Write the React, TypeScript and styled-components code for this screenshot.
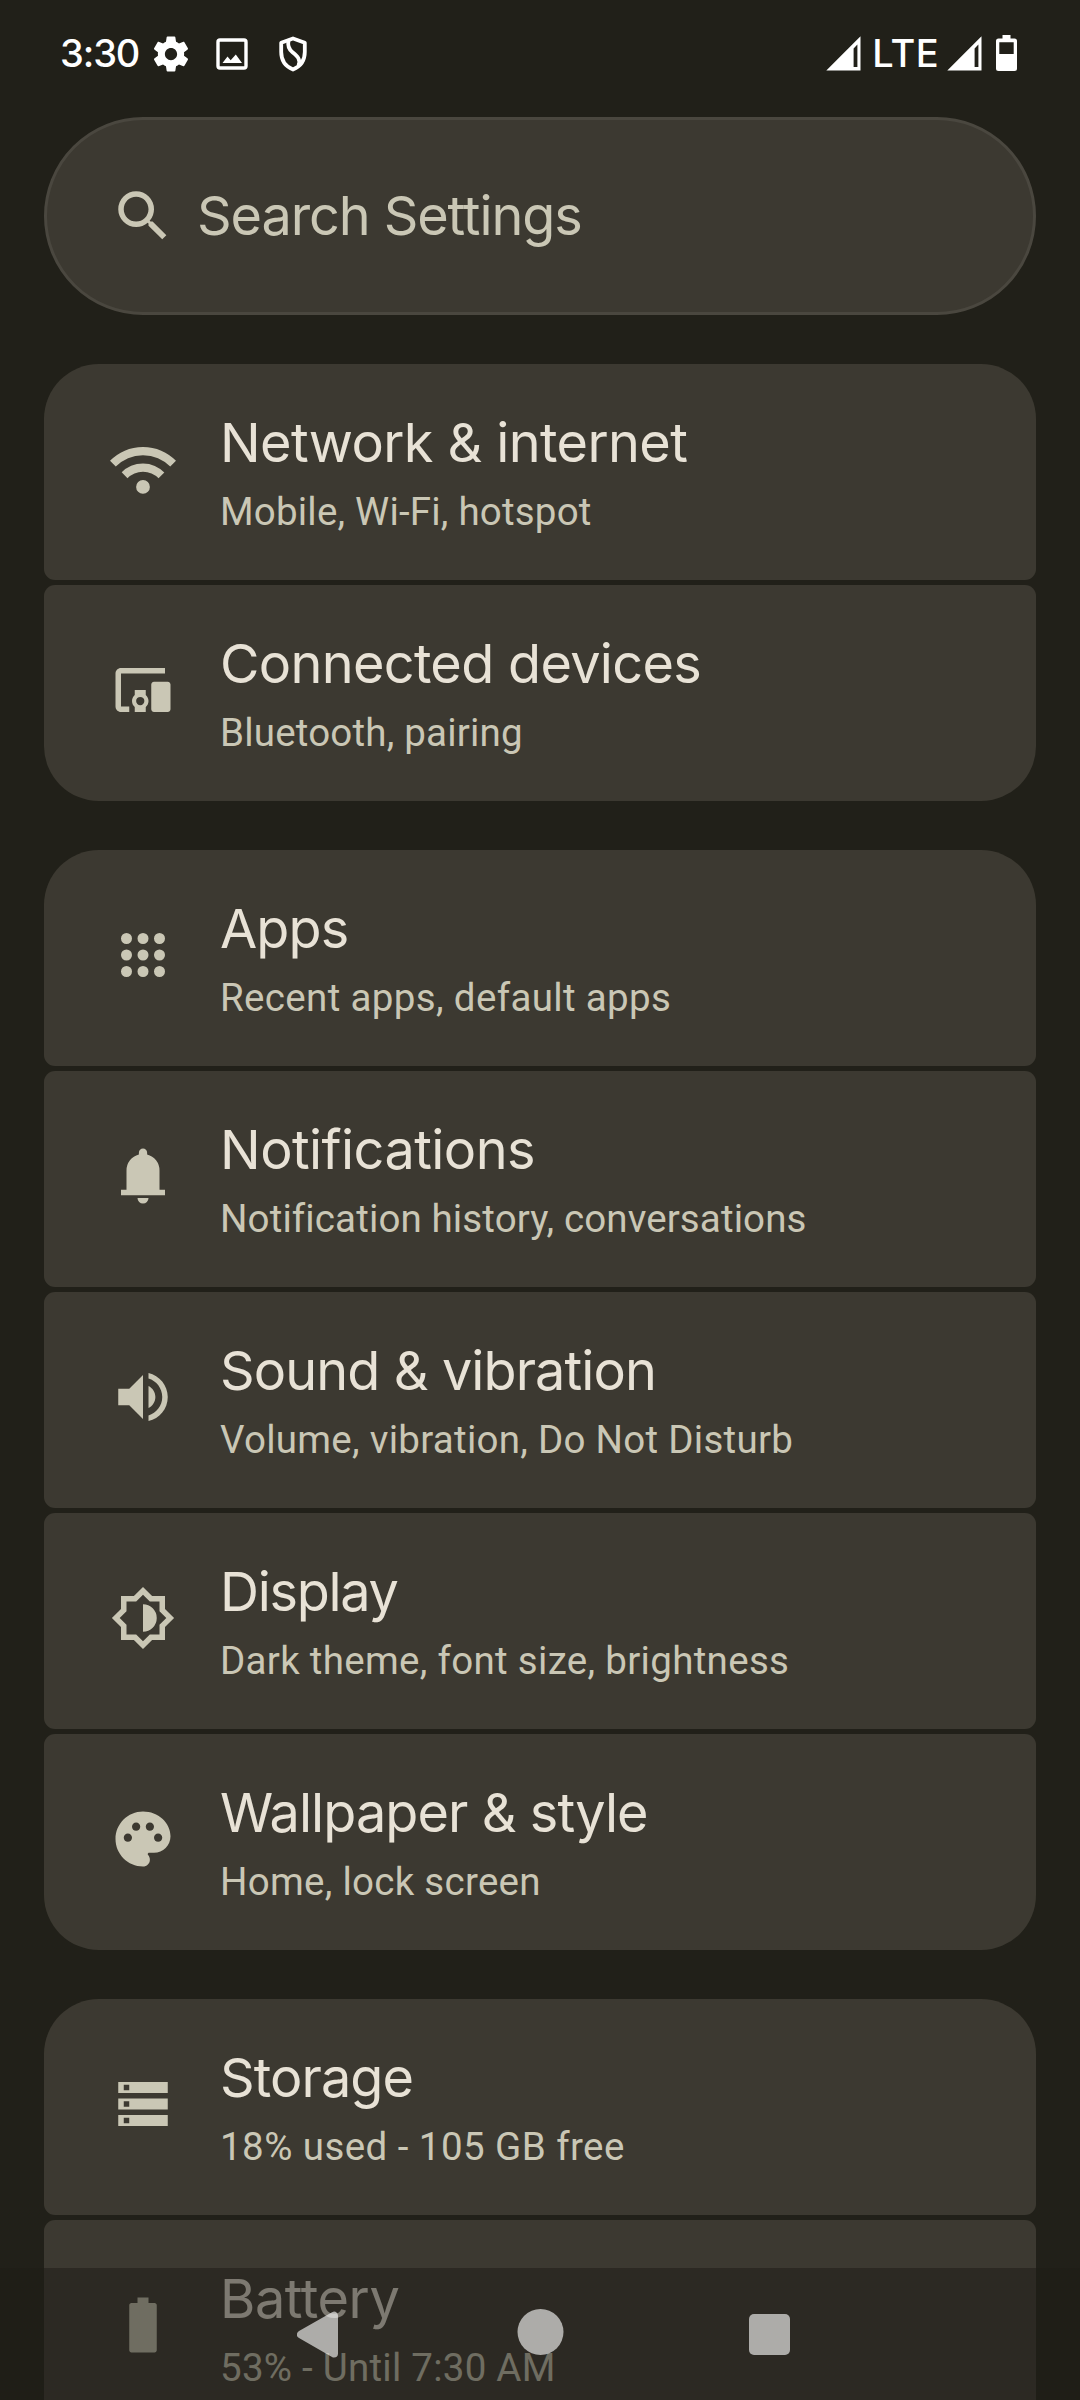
import React from "react";
import styled, { createGlobalStyle } from "styled-components";

const color = {
  background: "#212019",
  surface: "#3c3931",
  outline: "#4a473f",
  title: "#e8e2d6",
  muted: "#cac7b5",
  status: "#ffffff",
};

const GlobalStyle = createGlobalStyle`
  *, *::before, *::after { box-sizing: border-box; }
  body { margin: 0; background: ${color.background}; }
`;

const Screen = styled.div`
  position: relative;
  display: flex;
  flex-direction: column;
  width: 1080px;
  height: 2400px;
  overflow: hidden;
  background: ${color.background};
`;

const StatusBar = styled.header`
  display: flex;
  align-items: center;
  justify-content: space-between;
  flex: none;
  height: 107px;
  padding: 0 63px 0 60px;
  color: ${color.status};
`;

const StatusStart = styled.div`
  display: flex;
  align-items: center;
  gap: 19px;
`;

const StatusEnd = styled.div`
  display: flex;
  align-items: center;
`;

const StatusText = styled.span<{ $tracking: number }>`
  font: 500 38px/46px Inter, "Liberation Sans", sans-serif;
  letter-spacing: ${(p) => p.$tracking}px;
  padding-bottom: 2px;
`;

const Clock = styled(StatusText)`
  width: 70.5px;
  white-space: nowrap;
`;

const Network = styled(StatusText)`
  margin: 0 8px 0 11px;
`;

const StatusIcon = styled.svg`
  display: block;
  width: 42px;
  height: 42px;
`;

const SignalIcon = styled.svg`
  display: block;
  width: 35px;
  height: 35px;
`;

const BatteryLevel = styled.svg`
  display: block;
  width: 21px;
  height: 36px;
  margin: 0 0 2px 14px;
`;

const Content = styled.main`
  display: flex;
  flex-direction: column;
  gap: 49px;
  padding: 10px 44px 0;
`;

const SearchBar = styled.div`
  display: flex;
  align-items: center;
  gap: 21px;
  height: 198px;
  padding-left: 63px;
  border: 3px solid ${color.outline};
  border-radius: 99px;
  background: ${color.surface};
  color: ${color.muted};
`;

const Icon = styled.svg`
  display: block;
  flex: none;
  width: 66px;
  height: 66px;
  fill: currentColor;
  fill-rule: evenodd;
`;

const Heading = styled.span<{ $tracking: number }>`
  font: 400 54px/66px Inter, "Liberation Sans", sans-serif;
  letter-spacing: ${(p) => p.$tracking}px;
  white-space: nowrap;
`;

const Group = styled.section`
  display: flex;
  flex-direction: column;
  gap: 5px;
`;

const Card = styled.div<{ $first: boolean; $last: boolean }>`
  display: flex;
  flex: none;
  gap: 44px;
  height: 216px;
  padding-left: 66px;
  border-radius: ${(p) => (p.$first ? "55px 55px" : "11px 11px")} ${(p) => (p.$last ? "55px 55px" : "11px 11px")};
  background: ${color.surface};
  color: ${color.muted};

  & > ${Icon} {
    margin-top: 72px;
  }
`;

const Labels = styled.div`
  display: flex;
  flex-direction: column;
  gap: 13px;
  padding-top: 46px;
`;

const CardTitle = styled(Heading)`
  color: ${color.title};
`;

const Summary = styled.span<{ $tracking: number }>`
  font: 400 38.5px/46px Roboto, "Liberation Sans", sans-serif;
  letter-spacing: ${(p) => p.$tracking}px;
  white-space: nowrap;
`;

const NavigationBar = styled.nav`
  position: absolute;
  left: 0;
  right: 0;
  bottom: 0;
  display: flex;
  height: 132px;
  padding-left: 201px;
  background: rgba(31, 29, 22, 0.53);
`;

const NavButton = styled.svg`
  display: block;
  width: 226px;
  height: 132px;
  fill: #fff;
  stroke: #fff;
  stroke-linejoin: round;
  opacity: 0.61;
`;

const paths = {
  search:
    "M15.5 14h-.79l-.28-.27A6.471 6.471 0 0 0 16 9.5 6.5 6.5 0 1 0 9.5 16c1.61 0 3.09-.59 4.23-1.57l.27.28v.79l5 4.99L20.49 19l-4.99-5zm-6 0C7.01 14 5 11.99 5 9.5S7.01 5 9.5 5 14 7.01 14 9.5 11.99 14 9.5 14z",
  wifi: "M12 21q-1.05 0-1.775-.725T9.5 18.5t.725-1.775T12 16t1.775.725T14.5 18.5t-.725 1.775T12 21zM6.35 15.35l-2.1-2.15q1.475-1.475 3.463-2.337T12 10t4.288.875t3.462 2.375l-2.1 2.1q-1.1-1.1-2.55-1.725T12 13t-3.1.625t-2.55 1.725zM2.1 11.1L0 9q2.3-2.35 5.375-3.675T12 4t6.625 1.325T24 9l-2.1 2.1q-1.925-1.925-4.462-3.012T12 7T6.563 8.088T2.1 11.1z",
  devices:
    "M4 6h16V4H4c-1.1 0-2 .9-2 2v12c0 1.1.9 2 2 2h3v-2H4zM9 12v1.78c-.61.55-1 1.33-1 2.22s.39 1.67 1 2.22V20h4v-1.78c.61-.55 1-1.34 1-2.22s-.39-1.67-1-2.22V12zm2 5.5a1.5 1.5 0 1 1 0-3 1.5 1.5 0 0 1 0 3zM16 9h5c.5 0 1 .5 1 1v9c0 .5-.5 1-1 1h-5c-.5 0-1-.5-1-1v-9c0-.5.5-1 1-1z",
  apps: [6, 12, 18]
    .flatMap((y) => [6, 12, 18].map((x) => `M${x - 2} ${y}a2 2 0 1 0 4 0a2 2 0 1 0-4 0z`))
    .join(""),
  bell: "M4 19v-2h2v-7q0-2.075 1.25-3.687T10.5 4.2v-.7q0-.625.438-1.062T12 2t1.063.438T13.5 3.5v.7q2 .5 3.25 2.113T18 10v7h2v2zm8 3q-.825 0-1.412-.587T10 20h4q0 .825-.587 1.413T12 22z",
  volume:
    "M3 9v6h4l5 5V4L7 9H3zm13.5 3c0-1.77-1.02-3.29-2.5-4.03v8.05c1.48-.73 2.5-2.25 2.5-4.02zM14 3.23v2.06c2.89.86 5 3.54 5 6.71s-2.11 5.85-5 6.71v2.06c4.01-.91 7-4.49 7-8.77s-2.99-7.86-7-8.77z",
  brightness:
    "M20 15.31L23.31 12 20 8.69V4h-4.69L12 .69 8.69 4H4v4.69L.69 12 4 15.31V20h4.69L12 23.31 15.31 20H20zM18 14.48V18h-3.52L12 20.48 9.52 18H6v-3.52L3.52 12 6 9.52V6h3.52L12 3.52 14.48 6H18v3.52L20.48 12zM12 17a5 5 0 0 0 0-10z",
  palette:
    "M12 2C6.49 2 2 6.49 2 12s4.49 10 10 10c1.38 0 2.5-1.12 2.5-2.5 0-.61-.23-1.2-.64-1.67-.08-.1-.13-.21-.13-.33 0-.28.22-.5.5-.5H16c3.31 0 6-2.69 6-6 0-4.96-4.49-9-10-9zm5.5 11c-.83 0-1.5-.67-1.5-1.5s.67-1.5 1.5-1.5 1.5.67 1.5 1.5-.67 1.5-1.5 1.5zm-3-4c-.83 0-1.5-.67-1.5-1.5S13.67 6 14.5 6s1.5.67 1.5 1.5S15.33 9 14.5 9zM5 11.5c0-.83.67-1.5 1.5-1.5s1.5.67 1.5 1.5S7.33 13 6.5 13 5 12.33 5 11.5zm6-4c0 .83-.67 1.5-1.5 1.5S8 8.33 8 7.5 8.67 6 9.5 6s1.5.67 1.5 1.5z",
  storage:
    "M3 4h18v4H3zM5 5v2h2V5zM3 10h18v4H3zM5 11v2h2v-2zM3 16h18v4H3zM5 17v2h2v-2z",
  battery: "M10 2h4v2h2.2c.44 0 .8.36.8.8v16.4c0 .44-.36.8-.8.8H7.8c-.44 0-.8-.36-.8-.8V4.8c0-.44.36-.8.8-.8H10z",
  gear: "M19.43 12.98c.04-.32.07-.64.07-.98s-.03-.66-.07-.98l2.11-1.65c.19-.15.24-.42.12-.64l-2-3.46c-.12-.22-.39-.3-.61-.22l-2.49 1c-.52-.4-1.08-.73-1.69-.98l-.38-2.65C14.46 2.18 14.25 2 14 2h-4c-.25 0-.46.18-.49.42l-.38 2.65c-.61.25-1.17.59-1.69.98l-2.49-1c-.23-.09-.49 0-.61.22l-2 3.46c-.13.22-.07.49.12.64l2.11 1.65c-.04.32-.07.65-.07.98s.03.66.07.98l-2.11 1.65c-.19.15-.24.42-.12.64l2 3.46c.12.22.39.3.61.22l2.49-1c.52.4 1.08.73 1.69.98l.38 2.65c.03.24.24.42.49.42h4c.25 0 .46-.18.49-.42l.38-2.65c.61-.25 1.17-.59 1.69-.98l2.49 1c.23.09.49 0 .61-.22l2-3.46c.12-.22.07-.49-.12-.64l-2.11-1.65zM12 15.5c-1.93 0-3.5-1.57-3.5-3.5s1.57-3.5 3.5-3.5 3.5 1.57 3.5 3.5-1.57 3.5-3.5 3.5z",
};

type IconName = keyof typeof paths;

interface Item {
  icon: IconName;
  title: string;
  summary: string;
  titleTracking: number;
  summaryTracking: number;
}

interface ItemGroup {
  /** The group goes on below the bottom edge of the screen. */
  continues?: boolean;
  items: Item[];
}

const groups: ItemGroup[] = [
  {
    items: [
      { icon: "wifi", title: "Network & internet", summary: "Mobile, Wi-Fi, hotspot", titleTracking: -0.6, summaryTracking: 0.2 },
      { icon: "devices", title: "Connected devices", summary: "Bluetooth, pairing", titleTracking: -0.68, summaryTracking: 0.2 },
    ],
  },
  {
    items: [
      { icon: "apps", title: "Apps", summary: "Recent apps, default apps", titleTracking: -0.9, summaryTracking: 0.35 },
      { icon: "bell", title: "Notifications", summary: "Notification history, conversations", titleTracking: -0.55, summaryTracking: 0.12 },
      { icon: "volume", title: "Sound & vibration", summary: "Volume, vibration, Do Not Disturb", titleTracking: -0.9, summaryTracking: 0.28 },
      { icon: "brightness", title: "Display", summary: "Dark theme, font size, brightness", titleTracking: -1.3, summaryTracking: 0.31 },
      { icon: "palette", title: "Wallpaper & style", summary: "Home, lock screen", titleTracking: -0.92, summaryTracking: 0.28 },
    ],
  },
  {
    continues: true,
    items: [
      { icon: "storage", title: "Storage", summary: "18% used - 105 GB free", titleTracking: -0.9, summaryTracking: 0.44 },
      { icon: "battery", title: "Battery", summary: "53% - Until 7:30 AM", titleTracking: -0.4, summaryTracking: 0.25 },
    ],
  },
];

const Glyph = ({ name }: { name: IconName }) => (
  <Icon viewBox="0 0 24 24" aria-hidden="true">
    <path d={paths[name]} />
  </Icon>
);

const Signal = () => (
  <SignalIcon viewBox="0 0 35 35" aria-hidden="true">
    <path d="M0.3 34.5L34.5 0.3V34.5ZM27.6 12.4V31H31.4V8.6Z" fill="currentColor" fillRule="evenodd" />
  </SignalIcon>
);

export default function App() {
  return (
    <>
      <GlobalStyle />
      <Screen>
        <StatusBar>
          <StatusStart>
            <Clock $tracking={-1.1}>3:30</Clock>
            <StatusIcon viewBox="0 0 24 24" aria-hidden="true">
              <path d={paths.gear} fill="currentColor" fillRule="evenodd" />
            </StatusIcon>
            <StatusIcon viewBox="0 0 42 42" aria-hidden="true">
              <rect x="7" y="7" width="28" height="28" rx="2" fill="none" stroke="currentColor" strokeWidth="3.4" />
              <path d="M11.5 30L16.5 23.5L19.7 27.2L24.8 21.5L31 30Z" fill="currentColor" />
            </StatusIcon>
            <StatusIcon viewBox="0 0 42 42" aria-hidden="true">
              <g fill="none" stroke="currentColor" strokeWidth="3.8" strokeLinejoin="round">
                <path d="M21 5.5L9.2 9.8V19C9.2 27.5 13.5 33.5 21 36.5C28.5 33.5 32.8 27.5 32.8 19V9.8Z" />
                <path d="M16.5 7.5C15.5 12.5 16.5 16 20.5 19.3C25.5 23.3 29 26.5 26.5 32.5" />
              </g>
            </StatusIcon>
          </StatusStart>
          <StatusEnd>
            <Signal />
            <Network $tracking={0.4}>LTE</Network>
            <Signal />
            <BatteryLevel viewBox="0 0 21 36" aria-hidden="true">
              <path
                d="M6.5 0H14.5V3.5H18.5Q21 3.5 21 6V33.5Q21 36 18.5 36H2.5Q0 36 0 33.5V6Q0 3.5 2.5 3.5H6.5ZM3.3 7.2V19H17.7V7.2Z"
                fill="currentColor"
                fillRule="evenodd"
              />
            </BatteryLevel>
          </StatusEnd>
        </StatusBar>
        <Content>
          <SearchBar>
            <Glyph name="search" />
            <Heading $tracking={-1.1}>Search Settings</Heading>
          </SearchBar>
          {groups.map(({ items, continues }) => (
            <Group key={items[0].title}>
              {items.map((item, index) => (
                <Card key={item.title} $first={index === 0} $last={!continues && index === items.length - 1}>
                  <Glyph name={item.icon} />
                  <Labels>
                    <CardTitle $tracking={item.titleTracking}>{item.title}</CardTitle>
                    <Summary $tracking={item.summaryTracking}>{item.summary}</Summary>
                  </Labels>
                </Card>
              ))}
            </Group>
          ))}
        </Content>
        <NavigationBar>
          <NavButton viewBox="0 0 226 132" aria-label="Back">
            <path d="M100 66.5L133 47.7V85.5Z" strokeWidth="8" />
          </NavButton>
          <NavButton viewBox="0 0 226 132" aria-label="Home">
            <circle cx="113.5" cy="64" r="23" stroke="none" />
          </NavButton>
          <NavButton viewBox="0 0 226 132" aria-label="Recents">
            <rect x="96" y="46" width="41" height="41" rx="5" stroke="none" />
          </NavButton>
        </NavigationBar>
      </Screen>
    </>
  );
}
